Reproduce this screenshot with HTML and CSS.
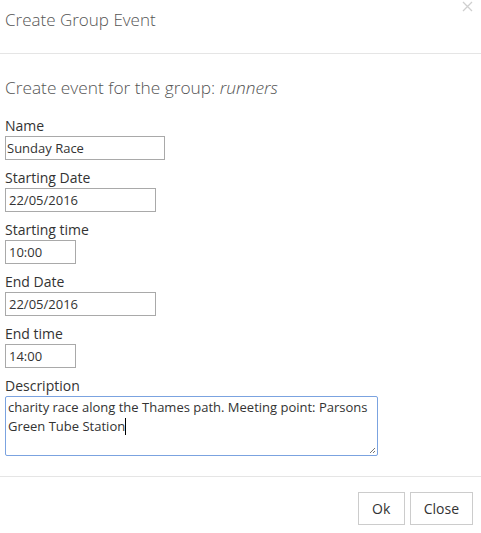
FILE: index.html
```html
<!DOCTYPE html>
<html>
<head>
<meta charset="utf-8">
<link rel="stylesheet" href="styles.css">
</head>
<body>
<div class="modal">
  <div class="modal-header">
    <h4 class="modal-title">Create Group Event</h4>
    <svg class="close" width="11" height="11" viewBox="0 0 11 11"><path d="M1 1 L10 10 M10 1 L1 10" stroke="#cfcfcf" stroke-width="1.3" fill="none"/></svg>
  </div>
  <div class="modal-body">
    <h4 class="subtitle">Create event for the group: <em>runners</em></h4>
    <div class="field">
      <label>Name</label>
      <div class="input w-name">Sunday Race</div>
    </div>
    <div class="field">
      <label>Starting Date</label>
      <div class="input w-date">22/05/2016</div>
    </div>
    <div class="field">
      <label>Starting time</label>
      <div class="input w-time">10:00</div>
    </div>
    <div class="field">
      <label>End Date</label>
      <div class="input w-date">22/05/2016</div>
    </div>
    <div class="field">
      <label>End time</label>
      <div class="input w-time">14:00</div>
    </div>
    <div class="field">
      <label>Description</label>
      <div class="textarea">charity race along the Thames path. Meeting point: Parsons Green Tube Station<span class="caret"></span>
        <svg class="grip" width="7" height="7" viewBox="0 0 7 7"><path d="M6 1 L1 6 M6 4 L4 6" stroke="#777" stroke-width="1" fill="none"/></svg>
      </div>
    </div>
  </div>
  <div class="modal-footer">
    <button class="btn btn-ok">Ok</button>
    <button class="btn">Close</button>
  </div>
</div>
</body>
</html>
```
FILE: styles.css
```css
* { box-sizing: border-box; }
html, body { margin: 0; padding: 0; background: #fff; }
body {
  font-family: "Open Sans", "Liberation Sans", sans-serif;
  color: #333;
  width: 481px;
  height: 533px;
  overflow: hidden;
}
.modal { width: 481px; }
.modal-header {
  position: relative;
  height: 54px;
  border-bottom: 1px solid #e5e5e5;
  padding: 8px 5px 0 5px;
}
.modal-title {
  margin: 0;
  font-size: 17px;
  font-weight: 300;
  line-height: 24px;
  color: #555;
}
.close {
  position: absolute;
  right: 8px;
  top: 1px;
}
.modal-body { padding: 22px 5px 0 5px; }
.subtitle {
  margin: 0 0 16px 0;
  font-size: 17.3px;
  font-weight: 300;
  line-height: 24px;
  color: #555;
}
.subtitle em { font-style: italic; }
.field { margin-bottom: 8px; }
.field label {
  display: block;
  font-size: 14px;
  line-height: 20px;
  color: #333;
}
.input {
  height: 24px;
  border: 1px solid #a9a9a9;
  font-size: 13px;
  line-height: 22px;
  padding: 0 0 0 1px;
  color: #333;
}
.w-name { width: 160px; }
.w-date { width: 151px; padding-left: 3px; }
.w-time { width: 71px; padding-left: 3px; }
.textarea {
  position: relative;
  width: 373px;
  height: 60px;
  border: 1px solid #7ba3e0;
  border-radius: 2px;
  font-size: 13px;
  line-height: 19px;
  padding: 1px 4px 0 2px;
  color: #333;
}
.caret {
  display: inline-block;
  width: 1px;
  height: 17px;
  background: #000;
  vertical-align: -4px;
}
.grip { position: absolute; right: 1px; bottom: 1px; }
.modal-footer {
  margin-top: 20px;
  border-top: 1px solid #e5e5e5;
  padding: 15px 8px 0 0;
  display: flex;
  justify-content: flex-end;
  gap: 5px;
}
.btn {
  font-family: "Open Sans", "Liberation Sans", sans-serif;
  font-size: 14px;
  color: #333;
  background: #fff;
  border: 1px solid #ccc;
  height: 33px;
  padding: 0 13px;
  margin: 0;
}
.btn-ok { width: 47px; padding: 0; }
```
